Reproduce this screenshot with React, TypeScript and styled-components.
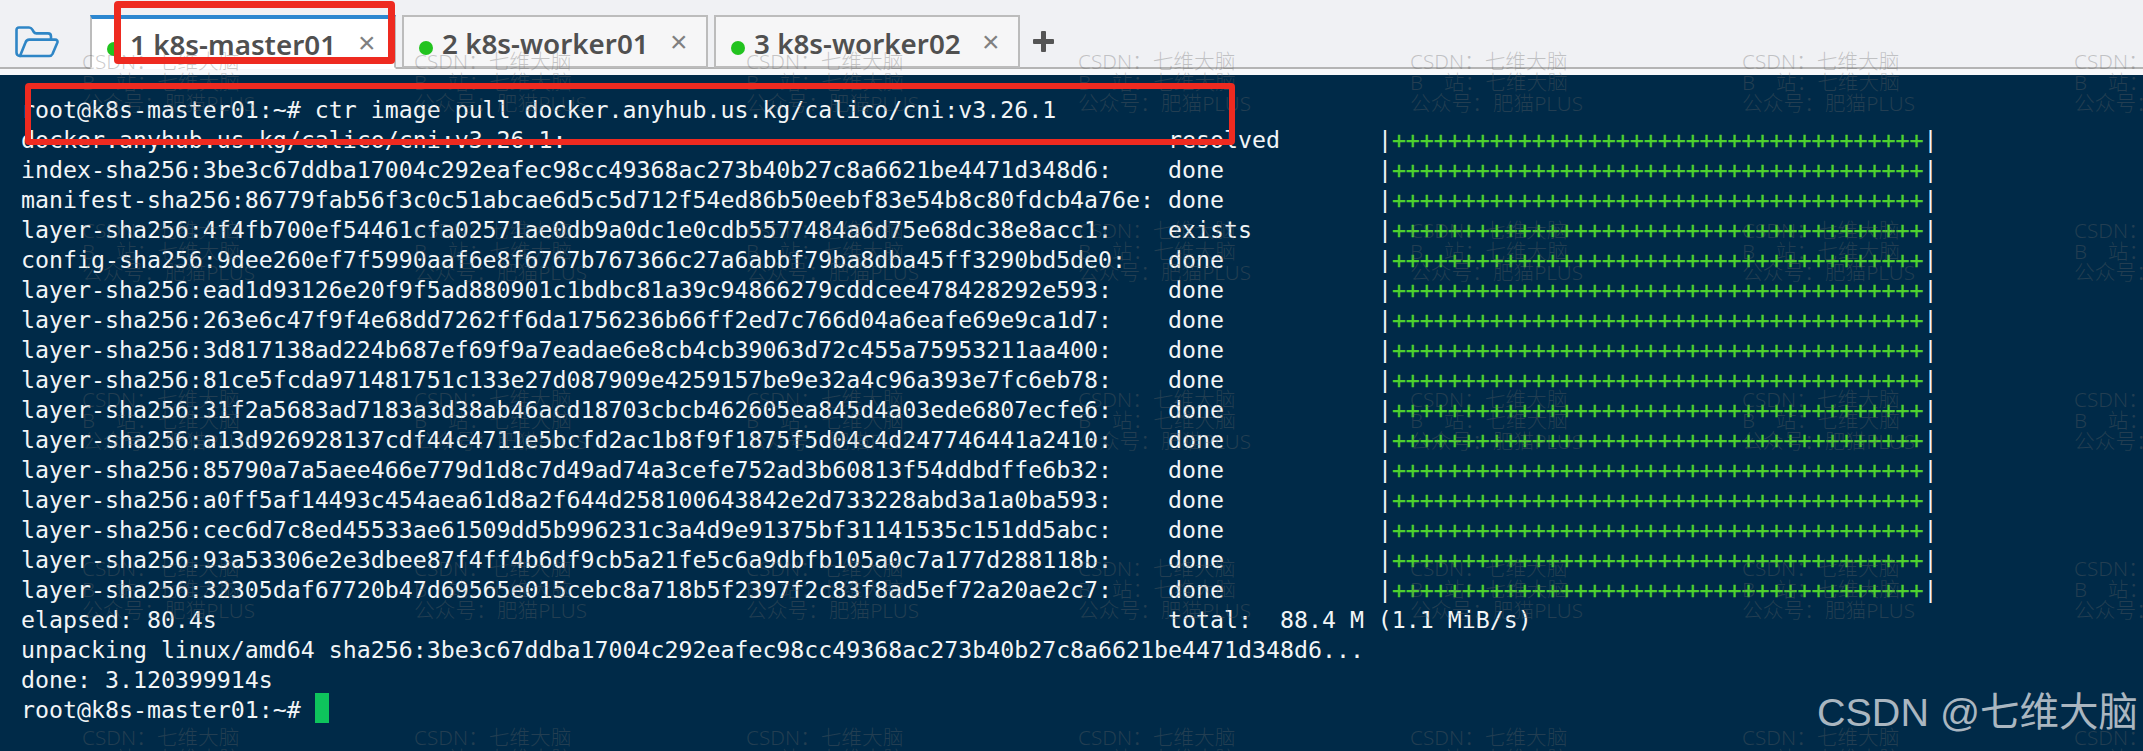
import React from "react";
import styled, { createGlobalStyle } from "styled-components";

const STATUS_COL = 82;
const BAR_COL = 97;
const PLUS_COUNT = 38;

const progressRows = [
  { name: "docker.anyhub.us.kg/calico/cni:v3.26.1:", status: "resolved" },
  { name: "index-sha256:3be3c67ddba17004c292eafec98cc49368ac273b40b27c8a6621be4471d348d6:", status: "done" },
  { name: "manifest-sha256:86779fab56f3c0c51abcae6d5c5d712f54ed86b50eebf83e54b8c80fdcb4a76e:", status: "done" },
  { name: "layer-sha256:4f4fb700ef54461cfa02571ae0db9a0dc1e0cdb5577484a6d75e68dc38e8acc1:", status: "exists" },
  { name: "config-sha256:9dee260ef7f5990aaf6e8f6767b767366c27a6abbf79ba8dba45ff3290bd5de0:", status: "done" },
  { name: "layer-sha256:ead1d93126e20f9f5ad880901c1bdbc81a39c94866279cddcee478428292e593:", status: "done" },
  { name: "layer-sha256:263e6c47f9f4e68dd7262ff6da1756236b66ff2ed7c766d04a6eafe69e9ca1d7:", status: "done" },
  { name: "layer-sha256:3d817138ad224b687ef69f9a7eadae6e8cb4cb39063d72c455a75953211aa400:", status: "done" },
  { name: "layer-sha256:81ce5fcda971481751c133e27d087909e4259157be9e32a4c96a393e7fc6eb78:", status: "done" },
  { name: "layer-sha256:31f2a5683ad7183a3d38ab46acd18703cbcb462605ea845d4a03ede6807ecfe6:", status: "done" },
  { name: "layer-sha256:a13d926928137cdf44c4711e5bcfd2ac1b8f9f1875f5d04c4d247746441a2410:", status: "done" },
  { name: "layer-sha256:85790a7a5aee466e779d1d8c7d49ad74a3cefe752ad3b60813f54ddbdffe6b32:", status: "done" },
  { name: "layer-sha256:a0ff5af14493c454aea61d8a2f644d258100643842e2d733228abd3a1a0ba593:", status: "done" },
  { name: "layer-sha256:cec6d7c8ed45533ae61509dd5b996231c3a4d9e91375bf31141535c151dd5abc:", status: "done" },
  { name: "layer-sha256:93a53306e2e3dbee87f4ff4b6df9cb5a21fe5c6a9dbfb105a0c7a177d288118b:", status: "done" },
  { name: "layer-sha256:32305daf67720b47d69565e015cebc8a718b5f2397f2c83f8ad5ef72a20ae2c7:", status: "done" },
];

const tabs = [
  { id: 1, label: "1 k8s-master01", active: true },
  { id: 2, label: "2 k8s-worker01", active: false },
  { id: 3, label: "3 k8s-worker02", active: false },
];

const FolderIcon = () => (
  <svg width="44" height="32" viewBox="0 0 44 32" fill="none" stroke="#2f86c6" strokeWidth="2.6" strokeLinejoin="round" strokeLinecap="round">
    <path d="M5 30 C2.5 30 1.5 28.5 1.5 26.5 V4 C1.5 2.5 2.5 1.5 4 1.5 H14 C15.5 1.5 16.5 2.2 17.2 3.4 L18.8 6 C19.4 7 20.2 7.4 21.4 7.4 H33 C35 7.4 36 8.6 36 10.4 V13.5" />
    <path d="M5 30 L10.5 16.5 C11.2 14.6 12.2 13.6 14.2 13.6 H40 C42 13.6 43 15 42.3 16.8 L37.5 28 C36.8 29.4 35.8 30 34.2 30 Z" />
  </svg>
);

const App: React.FC = () => {
  return (
    <Page>
      <GlobalStyle />
      <Toolbar>
        <FolderButton>
          <FolderIcon />
        </FolderButton>
        <TabList>
          {tabs.map((tab) => (
            <Tab key={tab.id} $active={tab.active}>
              <StatusDot />
              <TabLabel>{tab.label}</TabLabel>
              <TabClose>×</TabClose>
            </Tab>
          ))}
        </TabList>
        <AddTab>
          <svg width="21" height="21" viewBox="0 0 21 21" fill="#555">
            <rect x="8" y="0" width="5" height="21" rx="1" />
            <rect x="0" y="8" width="21" height="5" rx="1" />
          </svg>
        </AddTab>
      </Toolbar>
      <Separator />
      <Terminal>
        <Row>root@k8s-master01:~# ctr image pull docker.anyhub.us.kg/calico/cni:v3.26.1</Row>
        {progressRows.map((row) => (
          <Row key={row.name}>
            {row.name.padEnd(STATUS_COL) + row.status.padEnd(BAR_COL - STATUS_COL)}|
            <Plus>{"+".repeat(PLUS_COUNT)}</Plus>|
          </Row>
        ))}
        <Row>{"elapsed: 80.4s".padEnd(STATUS_COL)}total:  88.4 M (1.1 MiB/s)</Row>
        <Row>unpacking linux/amd64 sha256:3be3c67ddba17004c292eafec98cc49368ac273b40b27c8a6621be4471d348d6...</Row>
        <Row>done: 3.120399914s</Row>
        <Row>
          root@k8s-master01:~# <Cursor />
        </Row>
      </Terminal>
      <Watermarks>
        {Array.from({ length: 35 }, (_, i) => (
          <WatermarkTile key={i}>
            <div>CSDN：七维大脑</div>
            <div>B　站：七维大脑</div>
            <div>公众号：肥猫PLUS</div>
          </WatermarkTile>
        ))}
      </Watermarks>
      <TabHighlight />
      <CommandHighlight />
      <Signature>CSDN @七维大脑</Signature>
    </Page>
  );
};

export default App;

const GlobalStyle = createGlobalStyle`
  html, body {
    margin: 0;
    padding: 0;
    background: #002a48;
    overflow: hidden;
  }
`;

const Page = styled.div`
  position: relative;
  width: 2143px;
  height: 751px;
  display: flex;
  flex-direction: column;
  overflow: hidden;
  background: #f0f1f4;
`;

const Toolbar = styled.div`
  height: 67px;
  display: flex;
  align-items: flex-end;
  background: #f0f1f4;
  border-bottom: 2px solid #b4b4b4;
  box-sizing: content-box;
`;

const FolderButton = styled.div`
  width: 90px;
  height: 40px;
  padding-left: 15px;
  box-sizing: border-box;
  align-self: flex-start;
  margin-top: 26px;
`;

const TabList = styled.div`
  display: flex;
  gap: 6px;
`;

const Tab = styled.div<{ $active: boolean }>`
  width: 306px;
  height: ${(p) => (p.$active ? 54 : 53)}px;
  box-sizing: border-box;
  display: flex;
  align-items: center;
  padding: 2px 0 0 15px;
  background: ${(p) => (p.$active ? "#ffffff" : "#f6f6f7")};
  border: 2px solid #bcbcbc;
  border-top: ${(p) => (p.$active ? "4px solid #2c87d0" : "2px solid #bcbcbc")};
  border-bottom: ${(p) => (p.$active ? "2px solid #ffffff" : "2px solid #bcbcbc")};
  margin-bottom: ${(p) => (p.$active ? -2 : -1)}px;
`;

const StatusDot = styled.span`
  width: 14px;
  height: 14px;
  border-radius: 50%;
  background: #22c31f;
  margin-top: 10px;
  flex-shrink: 0;
`;

const TabLabel = styled.span`
  margin-left: 9px;
  width: 228px;
  font-family: "Noto Sans", sans-serif;
  font-weight: 600;
  font-size: 27.8px;
  line-height: 30px;
  color: #505050;
  white-space: pre;
`;

const TabClose = styled.span`
  font-family: "Liberation Sans", sans-serif;
  font-size: 30px;
  line-height: 30px;
  color: #808080;
  margin-top: -2px;
`;

const AddTab = styled.div`
  align-self: flex-start;
  margin: 31px 0 0 13px;
  height: 21px;
`;

const Separator = styled.div`
  height: 6px;
  background: #f7f8fa;
`;

const Terminal = styled.div`
  flex: 1;
  background: #002a48;
  padding: 20px 0 0 21px;
  font-family: "DejaVu Sans Mono", monospace;
  font-size: 23.24px;
  color: #f2f5f7;
`;

const Row = styled.div`
  height: 30px;
  line-height: 30px;
  white-space: pre;
`;

const Plus = styled.span`
  color: #4fd12e;
  -webkit-text-stroke: 0.3px #4fd12e;
`;

const Cursor = styled.span`
  display: inline-block;
  width: 14px;
  height: 30px;
  vertical-align: top;
  margin-top: -2px;
  background: #0ec45c;
`;

const Watermarks = styled.div`
  position: absolute;
  left: 82px;
  top: 51px;
  display: grid;
  grid-template-columns: repeat(7, 332px);
  grid-auto-rows: 169px;
  pointer-events: none;
  font-family: "Noto Sans", "Noto Sans CJK SC", sans-serif;
  font-size: 20.7px;
  font-weight: 300;
  line-height: 21px;
  color: rgba(102, 102, 102, 0.34);
`;

const WatermarkTile = styled.div`
  white-space: pre;
`;

const TabHighlight = styled.div`
  position: absolute;
  left: 114px;
  top: 1px;
  width: 281px;
  height: 63px;
  box-sizing: border-box;
  border: 7px solid #ee2a20;
  border-radius: 4px;
`;

const CommandHighlight = styled.div`
  position: absolute;
  left: 25px;
  top: 83px;
  width: 1210px;
  height: 62px;
  box-sizing: border-box;
  border: 6px solid #ee2a20;
  border-radius: 4px;
`;

const Signature = styled.div`
  position: absolute;
  right: 5px;
  top: 688px;
  font-family: "Liberation Sans", "Noto Sans CJK SC", sans-serif;
  font-size: 39.5px;
  line-height: 48px;
  color: #aab6c0;
  white-space: pre;
`;
